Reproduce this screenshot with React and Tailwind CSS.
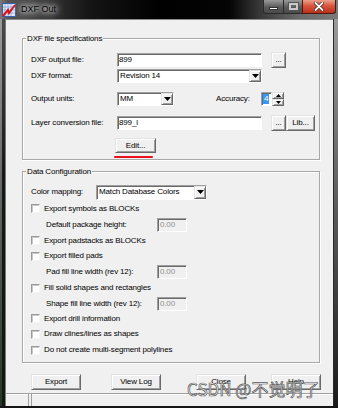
import React from "react";

function Sunken({ className = "", children }) {
  return (
    <div
      className={
        "flex items-center border border-[#a0a0a0] border-r-white border-b-white shadow-[inset_1px_1px_0_#696969] " +
        className
      }
    >
      {children}
    </div>
  );
}

function Btn({ className = "", children }) {
  return (
    <div
      className={
        "flex items-center justify-center bg-[#f0f0f0] border border-[#e3e3e3] border-r-[#696969] border-b-[#696969] shadow-[inset_1px_1px_0_#fff,inset_-1px_-1px_0_#a0a0a0] " +
        className
      }
    >
      {children}
    </div>
  );
}

function Down({ w = 7, h = 4 }) {
  return (
    <svg width={w} height={h} viewBox="0 0 7 4">
      <path d="M0 0h7L3.5 4z" fill="#000" />
    </svg>
  );
}

function Up({ w = 5, h = 3 }) {
  return (
    <svg width={w} height={h} viewBox="0 0 7 4">
      <path d="M0 4h7L3.5 0z" fill="#000" />
    </svg>
  );
}

function Select({ className = "", text }) {
  return (
    <Sunken className={"bg-white justify-between pl-[2px] " + className}>
      <span className="whitespace-nowrap">{text}</span>
      <Btn className="w-[12px] h-full shrink-0">
        <Down />
      </Btn>
    </Sunken>
  );
}

function Check({ label, h }) {
  return (
    <div className={"flex items-center " + h}>
      <div className="w-[9px] h-[9px] bg-white border border-[#9a9a9a] border-r-[#f4f4f4] border-b-[#f4f4f4] shadow-[inset_1px_1px_0_#c8c8c8]" />
      <span className="ml-[4px] whitespace-nowrap">{label}</span>
    </div>
  );
}

function Sub({ label, h }) {
  return (
    <div className={"flex items-center pl-[15px] " + h}>
      <span className="w-[111px] whitespace-nowrap">{label}</span>
      <Sunken className="w-[30px] h-[14px] bg-[#f0f0f0] pl-[2px] text-[#8f8f8f]">0.00</Sunken>
    </div>
  );
}

function Group({ title, className = "", children }) {
  return (
    <div
      className={
        "relative border border-[#a8a8a8] shadow-[inset_1px_1px_0_#fff,1px_1px_0_#fff] " +
        className
      }
    >
      <span className="absolute -top-[6px] left-[3px] px-[1px] bg-[#f0f0f0] leading-[11px] whitespace-nowrap">
        {title}
      </span>
      {children}
    </div>
  );
}

function TitleBar() {
  return (
    <div className="h-[19px] flex items-start bg-[linear-gradient(90deg,#7a7a7a_0px,#555_8px,#3a3a3a_40px,#151515_90px,#000_160px,#050505_230px,#3c3c3c_262px,#6a6a6a_300px,#7a7a7a_338px)]">
      <svg width="14" height="14" viewBox="0 0 14 14" className="ml-[2px] mt-[3px] shrink-0">
        <rect x="0.5" y="0.5" width="13" height="13" fill="#dfe8f6" stroke="#3a5fb0" />
        <path d="M3 1v12M6 1v12M9 1v12M1 4h12M1 7h12M1 10h12" stroke="#8aa4d8" strokeWidth="0.8" />
        <path d="M1 13L6 7l1 3 6-8" stroke="#e01010" strokeWidth="2" fill="none" />
      </svg>
      <span className="ml-[5px] mt-[4px] text-[9px] leading-[11px] tracking-normal text-black [font-family:'Liberation_Sans',Arial,sans-serif] [text-shadow:0_0_4px_#fff,0_0_8px_#fff,0_0_12px_#ddd]">
        DXF Out
      </span>
      <div className="ml-auto mr-[2px] flex h-[14px]">
        <div className="w-[21px] h-[14px] rounded-bl-[3px] border border-[#2a2a2a] border-t-0 bg-[linear-gradient(180deg,#9a9a9a,#5a5a5a_55%,#4a4a4a)] flex items-end justify-center pb-[3px]">
          <div className="w-[9px] h-[3px] bg-white border border-[#333]" />
        </div>
        <div className="w-[18px] h-[14px] border-y border-[#2a2a2a] border-t-0 bg-[linear-gradient(180deg,#9a9a9a,#5a5a5a_55%,#4a4a4a)] flex items-center justify-center">
          <div className="w-[9px] h-[7px] border-2 border-[#c8c8c8] shadow-[0_0_0_1px_#555]" />
        </div>
        <div className="w-[34px] h-[14px] rounded-br-[3px] border border-[#4a1a10] border-t-0 bg-[linear-gradient(180deg,#eaa08c,#d8553e_45%,#b8301c)] flex items-center justify-center">
          <svg width="10" height="9" viewBox="0 0 10 9">
            <path d="M1.5 1l7 7M8.5 1l-7 7" stroke="#3a1a14" strokeWidth="3.2" strokeLinecap="round" />
            <path d="M1.5 1l7 7M8.5 1l-7 7" stroke="#fff" strokeWidth="1.8" strokeLinecap="round" />
          </svg>
        </div>
      </div>
    </div>
  );
}

export default function App() {
  return (
    <div className="w-[338px] h-[408px] overflow-hidden relative flex flex-col bg-[#151515] text-black text-[8px] leading-[10px] tracking-[-0.15px] [font-family:'Liberation_Sans',Arial,sans-serif]">
      <TitleBar />
      <div className="flex h-[387px]">
        <div className="flex w-[6px] shrink-0">
          <div className="w-[2px] bg-[linear-gradient(180deg,#9a9a9a,#6a6a6a_40%,#2a332a)]" />
          <div className="w-[3px] bg-[linear-gradient(180deg,#4a4a4a,#151815_40%,#0c1c0c)]" />
          <div className="w-[1px] bg-[#7a7a7a]" />
        </div>
        <div className="w-[327px] flex flex-col bg-[#f0f0f0] border-t border-[#8a8a8a]">
          <div className="h-[373px] flex flex-col">
            <Group title="DXF file specifications" className="ml-[16px] mt-[18px] w-[298px] h-[122px]">
              <div className="pl-[8px] pt-[13px] flex flex-col">
                <div className="flex items-center h-[16px]">
                  <span className="w-[86px] whitespace-nowrap">DXF output file:</span>
                  <Sunken className="w-[145px] h-[14px] bg-white pl-[1px]">899</Sunken>
                  <Btn className="ml-[9px] w-[15px] h-[16px]">...</Btn>
                </div>
                <div className="flex items-center h-[16px]">
                  <span className="w-[86px] whitespace-nowrap">DXF format:</span>
                  <Select className="w-[145px] h-[14px]" text="Revision 14" />
                </div>
                <div className="flex items-center h-[16px] mt-[7px]">
                  <span className="w-[86px] whitespace-nowrap">Output units:</span>
                  <Select className="w-[57px] h-[14px]" text="MM" />
                  <span className="ml-[42px] w-[45px] whitespace-nowrap">Accuracy:</span>
                  <div className="flex h-[14px]">
                    <Sunken className="w-[11px] h-[14px] bg-white pl-[1px]">
                      <span className="bg-[#3399ff] text-white leading-[10px] px-[1px]">4</span>
                    </Sunken>
                    <div className="flex flex-col w-[12px] h-[14px]">
                      <Btn className="h-[7px]">
                        <Up />
                      </Btn>
                      <Btn className="h-[7px]">
                        <Down w={5} h={3} />
                      </Btn>
                    </div>
                  </div>
                </div>
                <div className="flex items-center h-[16px] mt-[8px]">
                  <span className="w-[86px] whitespace-nowrap">Layer conversion file:</span>
                  <Sunken className="w-[145px] h-[14px] bg-white pl-[1px]">899_l</Sunken>
                  <Btn className="ml-[9px] w-[15px] h-[16px]">...</Btn>
                  <Btn className="w-[29px] h-[16px]">Lib...</Btn>
                </div>
                <div className="pl-[84px] mt-[7px]">
                  <Btn className="w-[41px] h-[15px]">Edit...</Btn>
                </div>
                <div className="ml-[83px] mt-[3px] w-[39px] h-[2px] bg-[#e8101a] rounded-full" />
              </div>
            </Group>

            <Group title="Data Configuration" className="ml-[16px] mt-[11px] w-[298px] h-[192px]">
              <div className="pl-[8px] pt-[12px] flex flex-col">
                <div className="flex items-center h-[16px]">
                  <span className="w-[65px] whitespace-nowrap">Color mapping:</span>
                  <Select className="w-[111px] h-[15px]" text="Match Database Colors" />
                </div>
                <Check h="h-[17px]" label="Export symbols as BLOCKs" />
                <Sub h="h-[16px]" label="Default package height:" />
                <Check h="h-[15px]" label="Export padstacks as BLOCKs" />
                <Check h="h-[16px]" label="Export filled pads" />
                <Sub h="h-[16px]" label="Pad fill line width (rev 12):" />
                <Check h="h-[16px]" label="Fill solid shapes and rectangles" />
                <Sub h="h-[15px]" label="Shape fill line width (rev 12):" />
                <Check h="h-[15px]" label="Export drill information" />
                <Check h="h-[16px]" label="Draw clines/lines as shapes" />
                <Check h="h-[16px]" label="Do not create multi-segment polylines" />
              </div>
            </Group>

            <div className="flex mt-[11px] pl-[25px]">
              <Btn className="w-[50px] h-[16px]">Export</Btn>
              <Btn className="ml-[30px] w-[50px] h-[16px]">View Log</Btn>
              <Btn className="ml-[35px] w-[50px] h-[16px]">Close</Btn>
              <Btn className="ml-[25px] w-[50px] h-[16px]">Help</Btn>
            </div>
          </div>
          <div className="h-[13px] flex border-t border-[#a0a0a0] shadow-[inset_0_1px_0_#fff]">
            <div className="w-[23px] border-r border-[#a0a0a0]" />
            <div className="ml-[2px] flex-1 border-l border-[#a0a0a0]" />
          </div>
        </div>
        <div className="flex w-[5px] shrink-0">
          <div className="w-[1px] bg-[#2a2a2a]" />
          <div className="w-[4px] bg-[linear-gradient(180deg,#9a9a9a,#5a5a5a_50%,#1a1a1a)]" />
        </div>
      </div>
      <div className="h-[2px] bg-[#151515]" />
      <span className="absolute left-[187px] top-[379px] text-[17px] leading-[20px] tracking-normal whitespace-nowrap text-[#f8f8f8] [-webkit-text-stroke:0.7px_#5a5a5a] [font-family:'Noto_Sans_CJK_SC',sans-serif]">
        CSDN @不觉明了
      </span>
    </div>
  );
}
